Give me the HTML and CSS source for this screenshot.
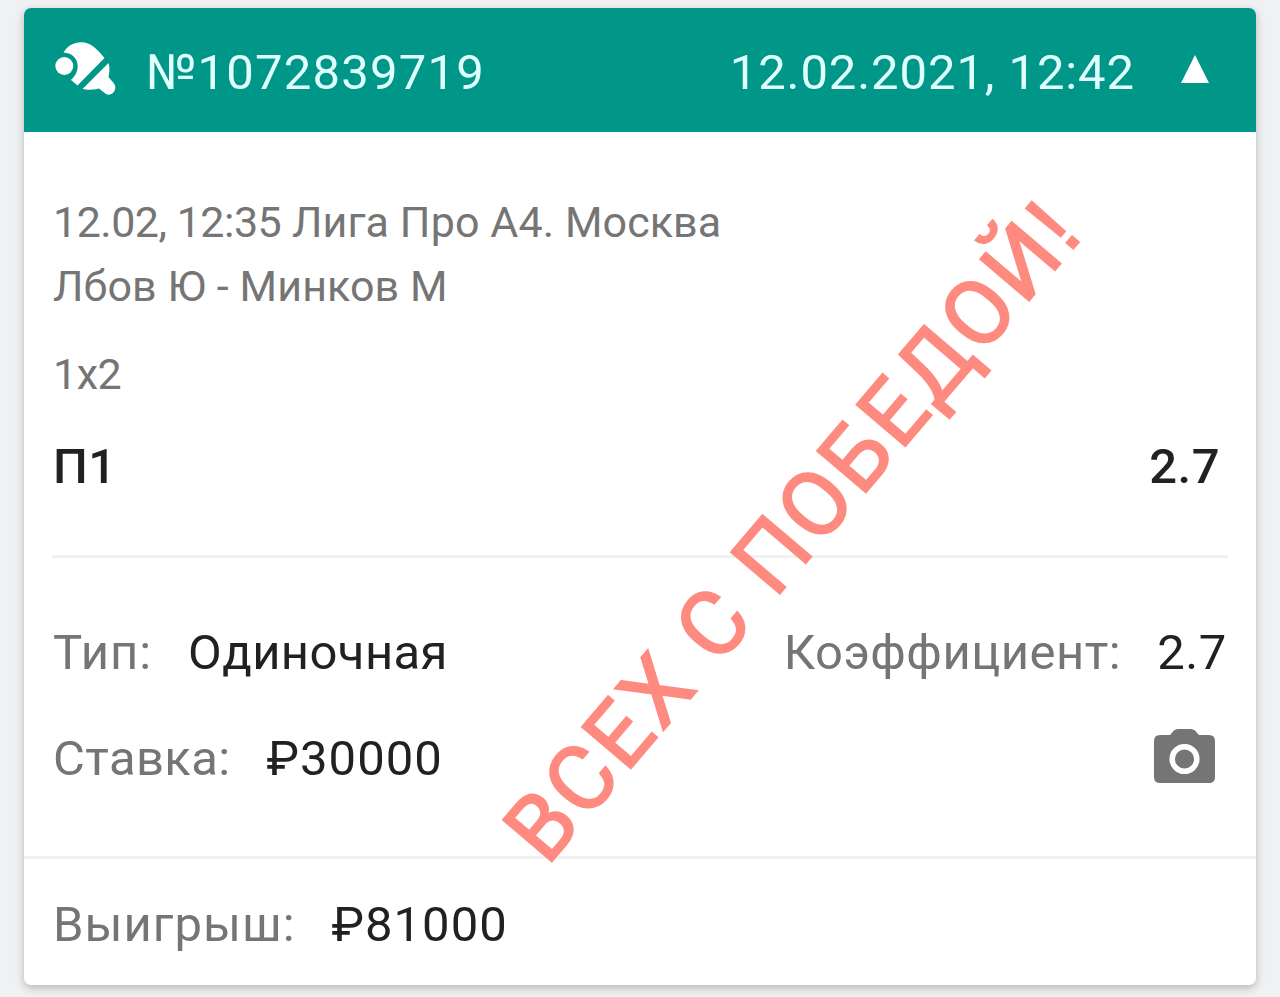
FILE: index.html
```
<!DOCTYPE html>
<html lang="ru">

<head>
    <meta charset="utf-8">
    <link rel="stylesheet" href="styles.css">
    <title>Ставка №1072839719</title>
</head>

<body>
    <div class="card">
        <div class="header">
            <svg class="racket" viewBox="0 0 62 56" fill="#fff">
                <circle cx="9.3" cy="26" r="9"/>
                <path d="M8.500 12.500C15 1 30-1 39 7Q45 12 49.500 18L22.500 45.500L16 40C28 29 23 13 8.500 12.500Z"/>
                <path d="M53.500 23C55 27 54.500 32 53.500 37L59 43.500C63 49 57 57 51 54L44 48.500C39 50 32 50 27.500 49Z"/>
            </svg>
            <span class="number">№1072839719</span>
            <span class="date">12.02.2021, 12:42</span>
            <svg class="arrow" viewBox="0 0 28 28" fill="#fff"><path d="M14 0L28 28H0Z"/></svg>
        </div>
        <div class="event">
            <p class="match"><span class="time">12.02, 12:35</span> Лига Про А4. Москва<br>Лбов Ю - Минков М</p>
            <p class="market">1x2</p>
            <div class="row outcome"><b>П1</b><b>2.7</b></div>
        </div>
        <div class="details">
            <div class="row">
                <div class="pair"><span class="type">Тип:</span><em class="single">Одиночная</em></div>
                <div class="pair"><span class="coef">Коэффициент:</span><em class="odds">2.7</em></div>
            </div>
            <div class="row">
                <div class="pair"><span class="stake">Ставка:</span><em class="sum">₽30000</em></div>
                <svg class="camera" viewBox="0 0 61 54">
                    <path fill="#757575" d="M6 6H16L20 1.500Q21.500 0 24 0H37Q39.500 0 41 1.500L45 6H55Q61 6 61 12V48Q61 54 55 54H6Q0 54 0 48V12Q0 6 6 6Z"/>
                    <circle cx="30.500" cy="30" r="12.300" fill="none" stroke="#fff" stroke-width="5.500"/>
                </svg>
            </div>
        </div>
        <div class="win pair"><span class="prize">Выигрыш:</span><em class="sum">₽81000</em></div>
    </div>
    <div class="stamp">ВСЕХ С ПОБЕДОЙ<span class="mark">!</span></div>
</body>

</html>
```
FILE: styles.css
```
body {
    background-color: #f0f1f3;
    margin: 0;
    padding: 8px 24px 12px;
    height: 977px;
    overflow: hidden;
    position: relative;
    font-family: Roboto, sans-serif;
    color: #757575;
}

.card {
    height: 977px;
    background-color: white;
    border-radius: 7px;
    box-shadow: 0 3px 9px rgba(0, 0, 0, 0.25);
}

.header {
    display: flex;
    align-items: center;
    box-sizing: border-box;
    height: 124px;
    padding: 6px 47px 0 31px;
    background-color: #009688;
    border-radius: 7px 7px 0 0;
    color: #e0ffff;
    font-size: 49px;
    line-height: 58px;
    white-space: nowrap;
}

.racket {
    width: 62px;
    height: 56px;
    margin-top: -10px;
}

.number {
    margin-left: 29px;
    letter-spacing: 1.2px;
}

.date {
    margin-left: auto;
    letter-spacing: 0.9px;
}

.arrow {
    width: 28px;
    height: 28px;
    margin: -8px 0 0 46px;
}

.event {
    box-sizing: border-box;
    height: 426px;
    margin: 0 28px;
    padding: 58px 0 0 1px;
    border-bottom: 3px solid #f0f1f3;
}

.match, .market {
    margin: 0;
    font-size: 43px;
    line-height: 64px;
    letter-spacing: 0.1px;
}

.time {
    letter-spacing: -0.5px;
}

.market {
    margin-top: 24px;
    letter-spacing: -0.5px;
}

.row {
    display: flex;
    justify-content: space-between;
    align-items: center;
}

.outcome {
    margin-top: 29px;
    padding-right: 8px;
    color: #212121;
    font-size: 49px;
    line-height: 64px;
    letter-spacing: 0.5px;
}

b {
    font-weight: 500;
}

.details {
    box-sizing: border-box;
    height: 301px;
    padding: 42px 29px 0 29px;
    border-bottom: 3px solid #f0f1f3;
}

.details .row {
    height: 106px;
}

.pair {
    display: flex;
    gap: 36px;
    font-size: 49px;
    line-height: 58px;
    letter-spacing: 1px;
    white-space: nowrap;
}

.single, .stake {
    letter-spacing: 0.4px;
}

.coef {
    letter-spacing: 0.5px;
}

.odds {
    letter-spacing: 0.6px;
}

em {
    font-style: normal;
    color: #212121;
}

.camera {
    width: 61px;
    height: 54px;
    margin: -7px 12px 0 0;
}

.win {
    padding: 37px 29px 0;
}

/* slogan across the slip, turned around the start of its baseline */
.stamp {
    position: absolute;
    left: 547px;
    top: 791px;
    color: #ff8a80;
    font-size: 90px;
    -webkit-text-stroke: 2px #ff8a80;
    line-height: 90px;
    letter-spacing: 3.7px;
    white-space: nowrap;
    transform-origin: 0 76px;
    transform: rotate(-49.6deg);
}

.mark {
    font-family: "Liberation Sans", sans-serif;
}
```
